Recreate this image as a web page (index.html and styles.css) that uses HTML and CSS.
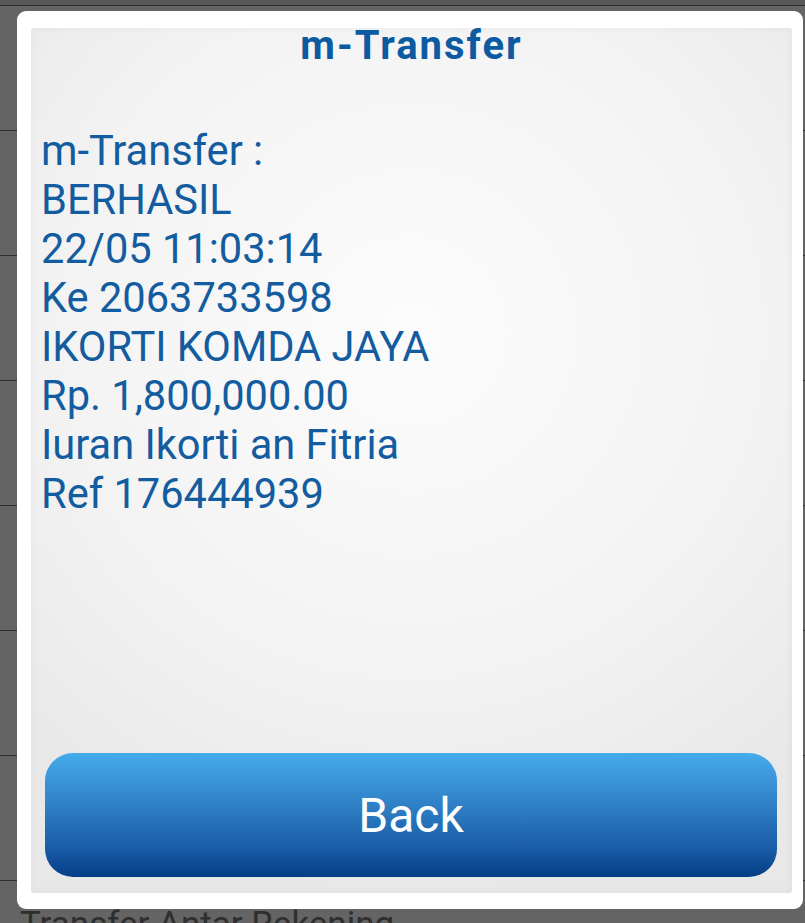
FILE: index.html
```html
<!DOCTYPE html>
<html>
<head>
<meta charset="utf-8">
<link rel="stylesheet" href="styles.css">
</head>
<body>
<div class="list">
  <div class="topbar"></div>
  <div class="row"></div>
  <div class="row"></div>
  <div class="row"></div>
  <div class="row"></div>
  <div class="row"></div>
  <div class="row"></div>
  <div class="row"></div>
  <div class="row row-text">Transfer Antar Rekening</div>
</div>
<div class="dialog">
  <div class="panel">
    <h1 class="title">m-Transfer</h1>
    <div class="message">
      <div>m-Transfer :</div>
      <div>BERHASIL</div>
      <div>22/05 11:03:14</div>
      <div>Ke 2063733598</div>
      <div>IKORTI KOMDA JAYA</div>
      <div>Rp. 1,800,000.00</div>
      <div>Iuran Ikorti an Fitria</div>
      <div>Ref 176444939</div>
    </div>
    <button class="back">Back</button>
  </div>
</div>
</body>
</html>
```
FILE: styles.css
```css
html, body {
  margin: 0;
  padding: 0;
  height: 100%;
  overflow: hidden;
}
body {
  background: #646464;
  font-family: Roboto, "Noto Sans", sans-serif;
}
.topbar {
  height: 5px;
  background: #585858;
  border-bottom: 1px solid #2c2c2c;
}
.row {
  height: 124px;
  border-bottom: 1px solid #2f2f2f;
}
.row-text {
  box-sizing: border-box;
  padding: 24px 0 0 20px;
  font-size: 35px;
  color: #2e2e2e;
  line-height: 40px;
}
.dialog {
  position: fixed;
  left: 17px;
  top: 11px;
  width: 786px;
  height: 898px;
  box-sizing: border-box;
  background: #ffffff;
  border-radius: 9px;
  padding: 17px 11px 16px 14px;
  display: flex;
}
.panel {
  flex: 1;
  display: flex;
  flex-direction: column;
  background: radial-gradient(ellipse 75% 65% at 50% 35%, #fcfcfc 0%, #f3f3f3 60%, #e8e8e8 100%);
  box-shadow: inset 0 0 6px 2px rgba(0,0,0,0.03);
  border-radius: 3px;
}
.title {
  margin: -2px 0 0 0;
  text-align: center;
  font-size: 40px;
  font-weight: 700;
  line-height: 40px;
  color: #0c5ba2;
  letter-spacing: 2px;
}
.message {
  margin-top: 60px;
  padding-left: 10px;
  font-size: 41.6px;
  line-height: 49px;
  color: #125c9f;
}
.back {
  margin: auto 15px 16px 14px;
  height: 124px;
  border: none;
  border-radius: 28px;
  background: linear-gradient(to bottom, #45abeb 0%, #3182c8 40%, #1a5ea8 75%, #053e87 100%);
  color: #ffffff;
  font-family: Roboto, "Noto Sans", sans-serif;
  font-size: 48px;
  padding: 0;
}
```
